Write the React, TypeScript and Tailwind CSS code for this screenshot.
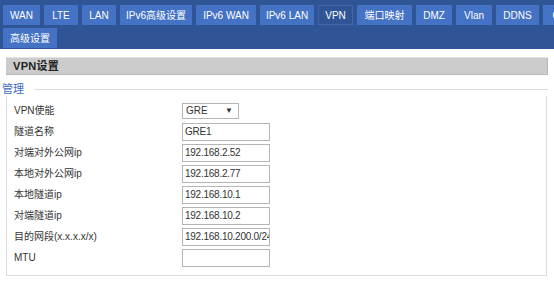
import clsx from "clsx";

const tabs = [
  { name: "WAN", w: "w-[37px]" },
  { name: "LTE", w: "w-[34px]" },
  { name: "LAN", w: "w-[34px]" },
  { name: "IPv6高级设置", w: "w-[72px]" },
  { name: "IPv6 WAN", w: "w-[60px]" },
  { name: "IPv6 LAN", w: "w-[54px]" },
  { name: "VPN", w: "w-[35px]", active: true },
  { name: "端口映射", w: "w-[55px]" },
  { name: "DMZ", w: "w-[36px]" },
  { name: "Vlan", w: "w-[36px]" },
  { name: "DDNS", w: "w-[43px]" },
  { name: "GPS", w: "w-[40px]" },
];

const rows = [
  { label: "隧道名称", value: "GRE1" },
  { label: "对端对外公网ip", value: "192.168.2.52" },
  { label: "本地对外公网ip", value: "192.168.2.77" },
  { label: "本地隧道ip", value: "192.168.10.1" },
  { label: "对端隧道ip", value: "192.168.10.2" },
  { label: "目的网段(x.x.x.x/x)", value: "192.168.10.200.0/24" },
  { label: "MTU", value: "" },
];

function Tab({ name, w, active }: { name: string; w: string; active?: boolean }) {
  return (
    <div
      className={clsx(
        "h-[20px] shrink-0 flex items-center justify-center text-white text-[10px] whitespace-nowrap overflow-hidden",
        w,
        active ? "bg-[#2f5597] border border-[#4266aa]" : "bg-[#4472c4]"
      )}
    >
      {name}
    </div>
  );
}

export default function App() {
  return (
    <div
      className="w-[554px] h-[281px] overflow-hidden bg-white text-[#333]"
      style={{ fontFamily: '"Liberation Sans", "Noto Sans CJK SC", sans-serif' }}
    >
      <div className="h-[49px] bg-[#2f5597] pt-[5px] pl-[3px] flex flex-col gap-[3px] overflow-hidden">
        <div className="flex gap-[4px]">
          {tabs.map((t) => (
            <Tab key={t.name} {...t} />
          ))}
        </div>
        <div className="flex">
          <Tab name="高级设置" w="w-[54px]" />
        </div>
      </div>

      <div className="mt-[8px] ml-[6px] w-[542px] border-t border-[#e2e2e2]">
        <div className="h-[17px] bg-[#cccccc] border-b border-r border-[#b8b8b8] flex items-center pl-[7px] text-[11px] font-bold text-[#222] tracking-[0.3px]">
          VPN设置
        </div>
      </div>

      <div className="mt-[7px] ml-[2px] w-[546px]">
        <div className="h-[14px] flex items-center">
          <span className="text-[11px] text-[#3c6ec0] leading-none">管理</span>
          <div className="flex-1 ml-[10px] border-t border-[#dcdcdc]" />
        </div>
        <div className="ml-[4px] w-[541px] h-[180px] border-l border-r border-b border-[#dcdcdc] pt-[4px] pl-[7px]">
          <div className="h-[21px] flex items-center text-[10px]">
            <span className="w-[168px]">VPN使能</span>
            <div className="w-[57px] h-[16px] border border-[#b5b5b5] flex items-center justify-between pl-[3px] pr-[5px]">
              <span>GRE</span>
              <span className="text-[8px]">▼</span>
            </div>
          </div>
          {rows.map((r) => (
            <div key={r.label} className="h-[21px] flex items-center text-[10px]">
              <span className="w-[168px]">{r.label}</span>
              <div className="w-[88px] h-[18px] border border-[#b5b5b5] flex items-center pl-[2px] overflow-hidden whitespace-nowrap tracking-[-0.25px]">
                {r.value}
              </div>
            </div>
          ))}
        </div>
      </div>
    </div>
  );
}
